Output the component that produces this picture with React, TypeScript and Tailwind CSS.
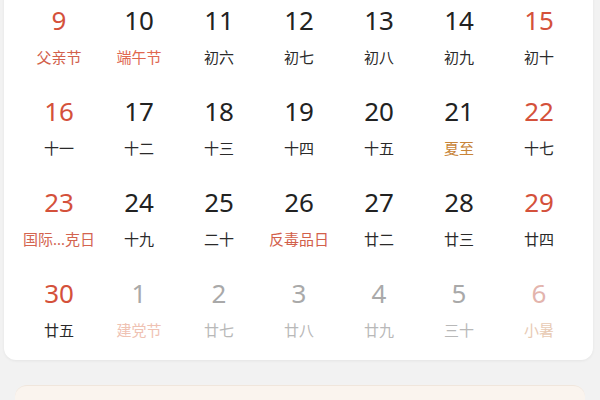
type Day = { n: string; label: string; numCls: string; labelCls: string };

const BLACK = "text-[#222222]";
const RED = "text-[#d4513b]";
const LBL = "text-[#2a2a2a]";
const LBL_RED = "text-[#d2604b]";

const d = (n: string, label: string, numCls = BLACK, labelCls = LBL): Day => ({ n, label, numCls, labelCls });

const days: Day[] = [
  d("9", "父亲节", RED, LBL_RED),
  d("10", "端午节", BLACK, "text-[#e0674f]"),
  d("11", "初六"),
  d("12", "初七"),
  d("13", "初八"),
  d("14", "初九"),
  d("15", "初十", RED),
  d("16", "十一", RED),
  d("17", "十二"),
  d("18", "十三"),
  d("19", "十四"),
  d("20", "十五"),
  d("21", "夏至", BLACK, "text-[#c88438]"),
  d("22", "十七", RED),
  d("23", "国际...克日", RED, "text-[#d3644f]"),
  d("24", "十九"),
  d("25", "二十"),
  d("26", "反毒品日", BLACK, LBL_RED),
  d("27", "廿二"),
  d("28", "廿三"),
  d("29", "廿四", RED),
  d("30", "廿五", RED),
  d("1", "建党节", "text-[#a9a9a9]", "text-[#efc2b3]"),
  d("2", "廿七", "text-[#a9a9a9]", "text-[#b8b8b8]"),
  d("3", "廿八", "text-[#a9a9a9]", "text-[#b8b8b8]"),
  d("4", "廿九", "text-[#a9a9a9]", "text-[#b8b8b8]"),
  d("5", "三十", "text-[#a9a9a9]", "text-[#b8b8b8]"),
  d("6", "小暑", "text-[#e3b4ad]", "text-[#e8cab4]"),
];

export default function App() {
  return (
    <div
      className="w-[600px] h-[400px] overflow-hidden bg-[#f2f2f2]"
      style={{ fontFamily: '"Noto Sans", "Noto Sans CJK SC", sans-serif' }}
    >
      <div className="ml-[4px] mr-[7px] -mt-[20px] pt-[23px] pb-[20px] pl-[15px] pr-[14px] bg-white rounded-[12px] shadow-[0_1px_3px_rgba(0,0,0,0.06)]">
        <div className="grid grid-cols-7 gap-y-[27px]">
          {days.map((day, i) => (
            <div key={i} className="flex flex-col items-center">
              <div className={`text-[26px] leading-[34px] ${day.numCls}`}>{day.n}</div>
              <div className={`mt-[10px] text-[15px] leading-[20px] whitespace-nowrap ${day.labelCls}`}>{day.label}</div>
            </div>
          ))}
        </div>
      </div>
      <div className="mx-[15px] mt-[25px] h-[60px] rounded-[12px] bg-[#faf4ee] border-t border-[#f0e6dc]" />
    </div>
  );
}
